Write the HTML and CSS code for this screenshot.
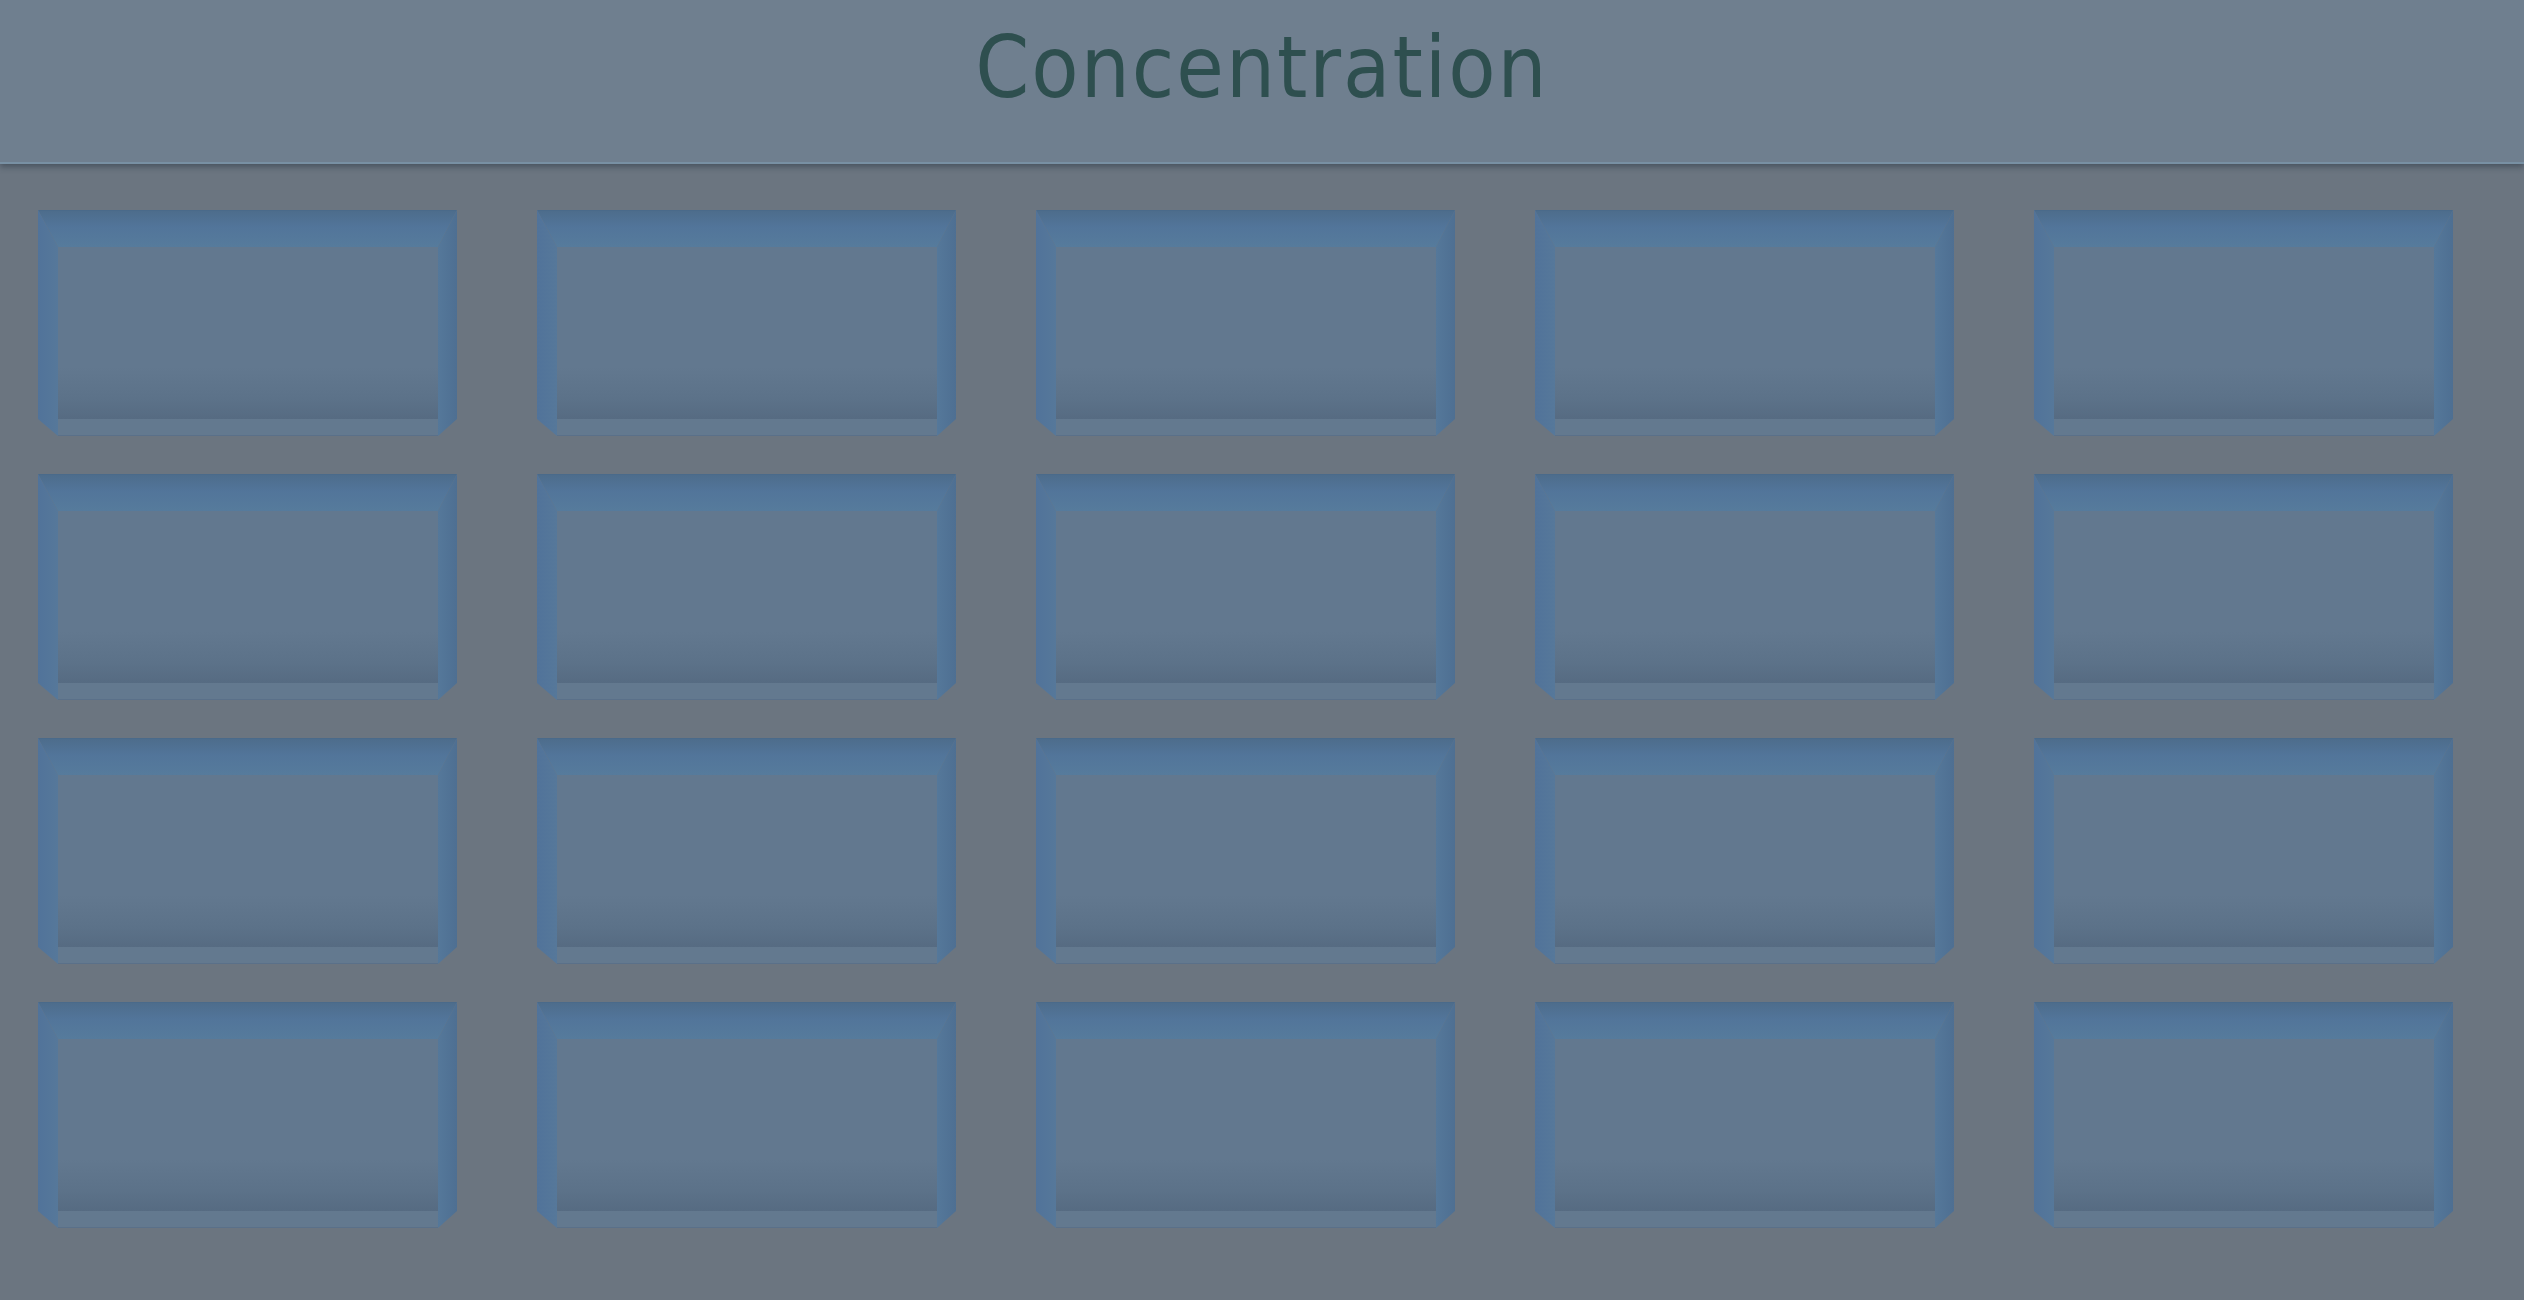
FILE: index.html
```html
<!DOCTYPE html>
<html lang="en">
<head>
<meta charset="utf-8">
<title>Concentration</title>
<link rel="stylesheet" href="styles.css">
</head>
<body>
<header class="header"><h1 class="title">Concentration</h1></header>
<main class="board">
  <div class="card"><div class="floor"></div><div class="front"></div><div class="wall-top"></div><div class="wall-left"></div><div class="wall-right"></div></div>
  <div class="card"><div class="floor"></div><div class="front"></div><div class="wall-top"></div><div class="wall-left"></div><div class="wall-right"></div></div>
  <div class="card"><div class="floor"></div><div class="front"></div><div class="wall-top"></div><div class="wall-left"></div><div class="wall-right"></div></div>
  <div class="card"><div class="floor"></div><div class="front"></div><div class="wall-top"></div><div class="wall-left"></div><div class="wall-right"></div></div>
  <div class="card"><div class="floor"></div><div class="front"></div><div class="wall-top"></div><div class="wall-left"></div><div class="wall-right"></div></div>
  <div class="card"><div class="floor"></div><div class="front"></div><div class="wall-top"></div><div class="wall-left"></div><div class="wall-right"></div></div>
  <div class="card"><div class="floor"></div><div class="front"></div><div class="wall-top"></div><div class="wall-left"></div><div class="wall-right"></div></div>
  <div class="card"><div class="floor"></div><div class="front"></div><div class="wall-top"></div><div class="wall-left"></div><div class="wall-right"></div></div>
  <div class="card"><div class="floor"></div><div class="front"></div><div class="wall-top"></div><div class="wall-left"></div><div class="wall-right"></div></div>
  <div class="card"><div class="floor"></div><div class="front"></div><div class="wall-top"></div><div class="wall-left"></div><div class="wall-right"></div></div>
  <div class="card"><div class="floor"></div><div class="front"></div><div class="wall-top"></div><div class="wall-left"></div><div class="wall-right"></div></div>
  <div class="card"><div class="floor"></div><div class="front"></div><div class="wall-top"></div><div class="wall-left"></div><div class="wall-right"></div></div>
  <div class="card"><div class="floor"></div><div class="front"></div><div class="wall-top"></div><div class="wall-left"></div><div class="wall-right"></div></div>
  <div class="card"><div class="floor"></div><div class="front"></div><div class="wall-top"></div><div class="wall-left"></div><div class="wall-right"></div></div>
  <div class="card"><div class="floor"></div><div class="front"></div><div class="wall-top"></div><div class="wall-left"></div><div class="wall-right"></div></div>
  <div class="card"><div class="floor"></div><div class="front"></div><div class="wall-top"></div><div class="wall-left"></div><div class="wall-right"></div></div>
  <div class="card"><div class="floor"></div><div class="front"></div><div class="wall-top"></div><div class="wall-left"></div><div class="wall-right"></div></div>
  <div class="card"><div class="floor"></div><div class="front"></div><div class="wall-top"></div><div class="wall-left"></div><div class="wall-right"></div></div>
  <div class="card"><div class="floor"></div><div class="front"></div><div class="wall-top"></div><div class="wall-left"></div><div class="wall-right"></div></div>
  <div class="card"><div class="floor"></div><div class="front"></div><div class="wall-top"></div><div class="wall-left"></div><div class="wall-right"></div></div>
</main>
</body>
</html>
```

FILE: styles.css
```css
html, body {
  margin: 0;
  padding: 0;
}
body {
  background: #6b7580;
  width: 2524px;
  height: 1300px;
  overflow: hidden;
  font-family: "DejaVu Sans Condensed", "DejaVu Sans", sans-serif;
}
.header {
  height: 162px;
  background: #6f7f8f;
  border-bottom: 2px solid #7890a3;
  box-shadow: 0 3px 6px rgba(30, 45, 55, 0.45);
  display: flex;
  justify-content: center;
  position: relative;
  z-index: 1;
}
.title {
  margin: 0;
  padding-top: 17px;
  font-size: 86px;
  font-weight: normal;
  line-height: 100px;
  letter-spacing: 2px;
  color: #2e4f4f;
}
.board {
  display: grid;
  grid-template-columns: repeat(5, 419px);
  grid-auto-rows: 226px;
  column-gap: 80px;
  row-gap: 38px;
  padding: 46px 0 0 38px;
}
.card {
  display: grid;
  grid-template-columns: 20px 1fr 19px;
  grid-template-rows: 37px 1fr 17px;
}
.card > div {
  min-width: 0;
  min-height: 0;
}
.floor {
  grid-column: 2;
  grid-row: 2;
  background: linear-gradient(to bottom, #62788f 0%, #62788f 70%, #5c7289 88%, #566b82 100%);
}
.front {
  grid-column: 2;
  grid-row: 3;
  background: #63798f;
  border-bottom: 1px solid #5a7089;
  box-sizing: border-box;
}
.wall-top {
  grid-column: 1 / 4;
  grid-row: 1;
  background: linear-gradient(to bottom, #4d6d8c 0%, #52759a 45%, #567b9c 100%);
  border-top: 1px solid #4a6a8a;
  clip-path: polygon(0 0, 100% 0, calc(100% - 19px) 100%, 20px 100%);
}
.wall-left {
  grid-column: 1;
  grid-row: 1 / 4;
  background: linear-gradient(to right, #51739a 0%, #56789a 100%);
  clip-path: polygon(0 0, 100% 37px, 100% 100%, 0 calc(100% - 17px));
}
.wall-right {
  grid-column: 3;
  grid-row: 1 / 4;
  background: linear-gradient(to right, #55789a 0%, #4e6f92 100%);
  clip-path: polygon(0 37px, 100% 0, 100% calc(100% - 17px), 0 100%);
}
```
